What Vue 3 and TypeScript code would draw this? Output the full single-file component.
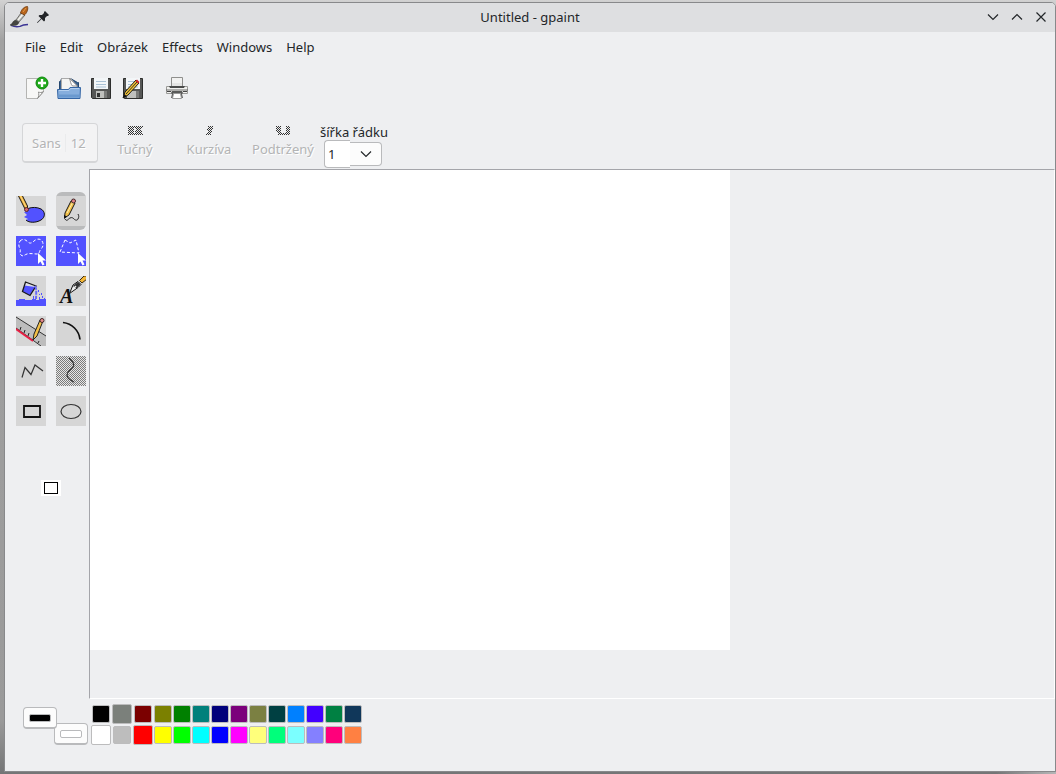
<script setup lang="ts">
import { ref } from 'vue'

interface Swatch {
  color: string
  big?: boolean
}

const menus: string[] = ['File', 'Edit', 'Obrázek', 'Effects', 'Windows', 'Help']

const swatches: Swatch[] = [
  { color: '#000000' },
  { color: '#7b807b', big: true },
  { color: '#7b0000' },
  { color: '#7b8000' },
  { color: '#008000' },
  { color: '#00807b' },
  { color: '#00007b' },
  { color: '#7b007b' },
  { color: '#7b8042' },
  { color: '#004042' },
  { color: '#0080ff' },
  { color: '#4200ff' },
  { color: '#008042' },
  { color: '#10375a' },
  { color: '#ffffff', big: true },
  { color: '#bdbdbd' },
  { color: '#ff0000', big: true },
  { color: '#ffff00' },
  { color: '#00ff00' },
  { color: '#00ffff' },
  { color: '#0000ff' },
  { color: '#ff00ff' },
  { color: '#ffff7b' },
  { color: '#00ff7b' },
  { color: '#7bffff' },
  { color: '#8480ff' },
  { color: '#ff007b' },
  { color: '#ff8042' },
]

const tool = ref<string>('pencil')
const lineWidth = ref<string>('1')
const foreground = ref<string>('#000000')
const background = ref<string>('#ffffff')

function widen(): void {
  lineWidth.value = String((Number(lineWidth.value) || 0) + 1)
}
</script>

<template>
  <div class="desktop">
    <div class="window">
      <header class="titlebar">
        <div class="title-left">
          <svg class="app-icon" viewBox="0 0 20 22" aria-hidden="true">
            <path d="M1 19.500q5 2 9 .8q3-1.500 8-1.800" fill="none" stroke="#3b3594" stroke-width="1.300" />
            <path d="M0 19c3-1 2-4 6-5l3 2c-1 4-5 4-9 3z" fill="#454641" stroke="#2a2a28" stroke-width=".5" />
            <path d="M6 14l5-7 4 2-6 7z" fill="#b9bab4" stroke="#5a5a58" stroke-width=".8" />
            <path d="M8 14l5-6" stroke="#f4f4f0" stroke-width="1.500" />
            <path d="M10.500 7c1-4 4-6.500 7-6.500c1 3-1 7-3 8.500z" fill="#b8651b" stroke="#6b3a12" stroke-width=".8" />
            <path d="M13 6l3-4" stroke="#e39a4c" stroke-width="1" />
          </svg>
          <button class="pin" type="button" aria-label="Keep on all desktops">
            <svg viewBox="0 0 12 12" aria-hidden="true">
              <path d="M8 0l4 4-1 1h-1l-2 2v2.500l-1 1-2.500-2.500L.5 12 0 11.500l4-4L1.500 5l1-1H5l2-2V1z" fill="#232629" />
            </svg>
          </button>
        </div>
        <h1>Untitled - gpaint</h1>
        <div class="title-right">
          <button type="button" aria-label="Minimize">
            <svg viewBox="0 0 12 12"><path d="M1 3.500l5 5 5-5" /></svg>
          </button>
          <button type="button" aria-label="Maximize">
            <svg viewBox="0 0 12 12"><path d="M1 8.500l5-5 5 5" /></svg>
          </button>
          <button type="button" aria-label="Close">
            <svg viewBox="0 0 12 12"><path d="M1.500 1.500l9 9M10.500 1.500l-9 9" /></svg>
          </button>
        </div>
      </header>

      <nav class="menubar" aria-label="Main menu">
        <button v-for="m in menus" :key="m" type="button">{{ m }}</button>
      </nav>

      <div class="toolbar" role="toolbar" aria-label="File">
        <button type="button" aria-label="New">
          <svg viewBox="0 0 24 24">
            <path d="M1.500 2.500h17v13l-6 7h-11z" fill="#f7f7f6" stroke="#b4b4b2" />
            <path d="M18.500 15.500c-2 1.500-4 1-5 .5c.500 2 .500 5-1 6.500z" fill="#fff" stroke="#8c8c8a" />
            <circle cx="17" cy="7" r="6" fill="#1fa81a" stroke="#0f8a0c" />
            <path d="M17 3v8M13 7h8" stroke="#fff" stroke-width="2.400" />
          </svg>
        </button>
        <button type="button" aria-label="Open">
          <svg viewBox="0 0 24 24">
            <path d="M2.500 15V5.500h1l1-3h9l7 4h1V15z" fill="#39618f" stroke="#24476f" />
            <path d="M4.500 14V2.500h9l6.500 7.500v4z" fill="#f4f4f3" stroke="#aaa" />
            <path d="M12.500 2.500l8 7.500h-5c-2-2-2-5-3-7.500z" fill="#fff" stroke="#777" stroke-width=".8" />
            <path d="M.5 13.500h11l1.500-2h10.500l-.5 11h-22z" fill="#86aedd" stroke="#3566a5" />
            <path d="M1.500 21.500h21v-3h-21z" fill="#6a99cf" />
            <path d="M2 14.500h10l1.500-2H22" fill="none" stroke="#b5d0ef" />
          </svg>
        </button>
        <button type="button" aria-label="Save">
          <svg viewBox="0 0 24 24">
            <path d="M2.500 2.500h19v20h-18l-1-1z" fill="#565756" stroke="#2d2e2d" />
            <path d="M5 2h14v11H5z" fill="#f3f6f8" />
            <path d="M7 5.500h10M7 8.500h10M7 11h10" stroke="#a9c1d4" />
            <path d="M7 15h11v7H7z" fill="#bfc0bd" />
            <path d="M15 15h3v7h-3z" fill="#797a78" />
            <path d="M8 17h3v4H8z" fill="#343534" />
          </svg>
        </button>
        <button type="button" aria-label="Save as">
          <svg viewBox="0 0 24 24">
            <path d="M2.500 2.500h19v20h-18l-1-1z" fill="#565756" stroke="#2d2e2d" />
            <path d="M5 2h14v11H5z" fill="#f3f6f8" />
            <path d="M7 5.500h10M7 8.500h10M7 11h10" stroke="#a9c1d4" />
            <path d="M6 15h12v7H6z" fill="#bfc0bd" />
            <path d="M15 15h3v7h-3z" fill="#797a78" />
            <path d="M2 22l2-6L15 4l3 3L7 19z" fill="#f0c23a" stroke="#1d1c18" />
            <path d="M5 18L16 6" stroke="#36311c" />
            <path d="M2 22l1.500-4 2 2z" fill="#111" />
            <path d="M14.500 5l1.500-1.500 2.500 2.500-1.500 1.500z" fill="#d02329" />
          </svg>
        </button>
        <button class="print" type="button" aria-label="Print">
          <svg viewBox="0 0 24 24">
            <path d="M6.500 10V1.500h11V10" fill="#f1f1f0" stroke="#8f8f8d" />
            <path d="M1.500 10.500h21v7h-21z" fill="#f0f0ee" stroke="#9a9a98" />
            <path d="M4 10h16l-1 2H5z" fill="#4a4b4a" />
            <path d="M7 7h10v3H7z" fill="#e4e4e3" />
            <path d="M1 14h22" stroke="#6d6d6b" />
            <path d="M2 15.500h4M18 15.500h4" stroke="#444" />
            <path d="M6 17l1-2h10l1 2-1 1 1 4H6l1-4z" fill="#5a5b5a" />
            <path d="M8.500 17.500h7l1 5h-9z" fill="#fff" stroke="#999" />
          </svg>
        </button>
      </div>

      <div class="formatbar">
        <button class="font-button" type="button" disabled><span>Sans</span><span class="size">12</span></button>
        <button class="style-button" type="button" disabled>
          <svg viewBox="0 0 18 9" shape-rendering="crispEdges" aria-hidden="true">
            <defs>
              <pattern id="dither" width="2" height="2" patternUnits="userSpaceOnUse">
                <path d="M0 0h1v1H0zM1 1h1v1H1z" fill="#333" />
              </pattern>
            </defs>
            <path d="M2 0h6v9H2zM8 0h10l-3 4 3 5H8l2-5z" fill="url(#dither)" />
          </svg>
          <span>Tučný</span>
        </button>
        <button class="style-button" type="button" disabled>
          <svg viewBox="0 0 18 9" shape-rendering="crispEdges" aria-hidden="true">
            <path d="M8 0h6l-3 9H6l2-4H7z" fill="url(#dither)" />
          </svg>
          <span>Kurzíva</span>
        </button>
        <button class="style-button" type="button" disabled>
          <svg viewBox="0 0 18 9" shape-rendering="crispEdges" aria-hidden="true">
            <path d="M2 0h5v7h5V0h4v9H4V6H2z" fill="url(#dither)" />
          </svg>
          <span>Podtržený</span>
        </button>
        <div class="line-width">
          <label for="line-width">šířka řádku</label>
          <div class="combo">
            <input id="line-width" v-model="lineWidth" type="text" inputmode="numeric" />
            <button type="button" aria-label="Choose line width" @click="widen">
              <svg viewBox="0 0 12 12"><path d="M1 3.500l5 5 5-5" /></svg>
            </button>
          </div>
        </div>
      </div>

      <main class="workspace">
        <aside class="tools">
          <div class="tool-grid" role="toolbar" aria-label="Tools">
            <button type="button" aria-label="Brush" :aria-pressed="tool === 'brush'" @click="tool = 'brush'">
              <svg viewBox="0 0 30 30">
                <path d="M11 13c4-2 10-2 14 0s5 8 0 11-12 3-15 0l2-1-4-2 3-2-3-3 4-1z" fill="#5252ff" />
                <path d="M12 12.500c4-1.500 9-1.500 13 .5s5 8 0 11-12 3-15 0" fill="none" stroke="#111" />
                <path d="M2-1l7 14h2.500V10L6-1z" fill="#f2b13a" stroke="#1a1a1a" />
                <path d="M4-1l6 12" stroke="#fbdc86" />
                <circle cx="10.500" cy="13.500" r="2" fill="#d4686c" stroke="#54292b" />
              </svg>
            </button>
            <button type="button" aria-label="Pencil" :aria-pressed="tool === 'pencil'" @click="tool = 'pencil'">
              <svg viewBox="0 0 30 30">
                <path d="M8.500 22l.5-5 6-12 4 2-6 12z" fill="#f2c04a" stroke="#1a1a1a" />
                <path d="M11 17l6-11" stroke="#fff0b0" />
                <path d="M8 23v-4l3 1.500z" fill="#111" />
                <circle cx="17.500" cy="5" r="2" fill="#e28087" stroke="#43282a" />
                <path d="M9 23c2 3 3 0 5-1s3 0 4 1 3 2 4 0 1-3 0-5" fill="none" stroke="#222" />
              </svg>
            </button>
            <button type="button" aria-label="Free selection" :aria-pressed="tool === 'lasso'" @click="tool = 'lasso'">
              <svg class="blue" viewBox="0 0 30 30">
                <path d="M4 5c3-3 6-1 8 1s4 1 6-1 6-3 8 0 1 6-1 8-1 5-4 5-7-1-10 0-4 3-6 1 0-4-1-6-2-5 0-8z" class="dash" />
                <path d="M22 17v11l2.500-2.500 2 4 2-1-2-4H30z" fill="#fff" />
              </svg>
            </button>
            <button type="button" aria-label="Polygon selection" :aria-pressed="tool === 'polyselect'" @click="tool = 'polyselect'">
              <svg class="blue" viewBox="0 0 30 30">
                <path d="M9 4l5 3 6-3 3 13-19-1z" class="dash" />
                <path d="M22 17v11l2.500-2.500 2 4 2-1-2-4H30z" fill="#fff" />
              </svg>
            </button>
            <button type="button" aria-label="Fill" :aria-pressed="tool === 'fill'" @click="tool = 'fill'">
              <svg viewBox="0 0 30 30">
                <path d="M0 24h3v-1h6v1h7v-1h4v1h3v-1h7v7H0z" fill="#5252ff" />
                <path d="M9.500 6L20 10l-6 9.500-7.500-4z" fill="#dfdfe6" />
                <path d="M8.500 9.500L19 11l-5 8.500-7.500-4z" fill="#5252ff" />
                <path d="M9.500 6L20 10l-6 9.500-7.500-4z" fill="none" stroke="#181818" stroke-width="1.300" />
                <path d="M19 10c2 3 1 8 1 13" fill="none" stroke="#6a6af5" stroke-width="2" stroke-dasharray="4 1" />
                <path d="M23 21h1v2h-1zM25 17h1v2h-1zM26 20h1v2h-1zM22 14h1v2h-1zM17 20h1v3h-1zM28 22h1v1h-1zM23 18h1v1h-1z" fill="#5252ff" />
              </svg>
            </button>
            <button type="button" aria-label="Text" :aria-pressed="tool === 'text'" @click="tool = 'text'">
              <svg viewBox="0 0 30 30">
                <text x="4" y="27" font-family="Liberation Serif, serif" font-size="20" font-style="italic" font-weight="bold" fill="#111">A</text>
                <path d="M23.500 4.500L28 0h3v3l-5 4z" fill="#f3b636" stroke="#3a2b10" />
                <path d="M13.500 17.500L17 9l5-3.500 3 3-3 3z" fill="#eee" stroke="#111" />
                <path d="M17 10l5-4 2.500 2.500-4 4z" fill="#333" />
                <path d="M18 12l2-2" stroke="#eee" stroke-width="1.500" />
              </svg>
            </button>
            <button type="button" aria-label="Line" :aria-pressed="tool === 'line'" @click="tool = 'line'">
              <svg viewBox="0 0 30 30">
                <path d="M0 1l30 19v10h-4L0 12z" fill="#bdbdbd" />
                <path d="M0 1l30 19M0 12l25 18" fill="none" stroke="#333" />
                <path d="M4 14l1-3M8 17l1-3M12 20l1-3M22 27l1-2" stroke="#222" />
                <path d="M0 13l17 12" stroke="#e81e43" stroke-width="2" />
                <path d="M17 24l1-6 6-14 3 1-6 15z" fill="#f1bf48" stroke="#222" />
                <circle cx="26" cy="4.500" r="2" fill="#e58b8d" stroke="#402828" />
              </svg>
            </button>
            <button type="button" aria-label="Arc" :aria-pressed="tool === 'arc'" @click="tool = 'arc'">
              <svg viewBox="0 0 30 30">
                <path d="M7 6.500c9 1 16 8 17 17" fill="none" stroke="#111" stroke-width="1.700" />
              </svg>
            </button>
            <button type="button" aria-label="Polyline" :aria-pressed="tool === 'polyline'" @click="tool = 'polyline'">
              <svg viewBox="0 0 30 30">
                <path d="M6 21.500l3-10 6 7 4-9.500 8 6" fill="none" stroke="#333" stroke-width="1.200" />
              </svg>
            </button>
            <button type="button" aria-label="Curve" disabled>
              <svg viewBox="0 0 30 30">
                <path d="M0 0h30v30H0z" fill="#e6e6e6" />
                <path d="M0 0h30v30H0z" fill="url(#dither)" opacity=".6" shape-rendering="crispEdges" />
                <path d="M13 2c4 4 6 6 4 9s-6 4-6 8 4 5 7 7" fill="none" stroke="#333" stroke-width="1.200" />
              </svg>
            </button>
            <button type="button" aria-label="Rectangle" :aria-pressed="tool === 'rect'" @click="tool = 'rect'">
              <svg viewBox="0 0 30 30">
                <path d="M8 10h16v11H8z" fill="none" stroke="#111" stroke-width="1.800" />
              </svg>
            </button>
            <button type="button" aria-label="Ellipse" :aria-pressed="tool === 'ellipse'" @click="tool = 'ellipse'">
              <svg viewBox="0 0 30 30">
                <ellipse cx="15" cy="15.500" rx="10" ry="7" fill="none" stroke="#333" stroke-width="1.200" />
              </svg>
            </button>
          </div>
          <button class="fill-mode" type="button" aria-label="Outline only"><i></i></button>
        </aside>
        <div class="viewport">
          <canvas class="drawing" width="640" height="480" aria-label="Drawing"></canvas>
        </div>
      </main>

      <footer class="palette">
        <div class="current">
          <button class="fore" type="button" aria-label="Foreground colour">
            <i :style="{ backgroundColor: foreground }"></i>
          </button>
          <button class="back" type="button" aria-label="Background colour">
            <i :style="{ backgroundColor: background }"></i>
          </button>
        </div>
        <div class="swatches">
          <button
            v-for="s in swatches"
            :key="s.color"
            type="button"
            :class="{ big: s.big }"
            :aria-label="s.color"
            :style="{ backgroundColor: s.color }"
            @click="foreground = s.color"
            @contextmenu.prevent="background = s.color"
          ></button>
        </div>
      </footer>
    </div>
  </div>
</template>

<style>
body {
  margin: 0;
}
</style>

<style scoped>
.desktop {
  box-sizing: border-box;
  min-height: 100vh;
  display: flex;
  padding: 2px 0 2px 4px;
  background:
    linear-gradient(to right, transparent calc(100% - 60px), #b4b5b6) bottom / 100% 2px no-repeat,
    linear-gradient(#d2d2d2, #a2a2a2 40px, #9a9a9a 720px, #747576);
  font-family: "Noto Sans", sans-serif;
  font-size: 13px;
  line-height: 18px;
  color: #232629;
}

.window {
  flex: 1;
  min-width: 0;
  display: flex;
  flex-direction: column;
  border: 1px solid #88898b;
  border-radius: 5px 5px 0 0;
  background: #eeeff1;
  overflow: hidden;
}

button {
  box-sizing: border-box;
  margin: 0;
  padding: 0;
  border: 0;
  background: none;
  font: inherit;
  color: inherit;
}

svg {
  display: block;
}

.titlebar {
  height: 29px;
  display: grid;
  grid-template-columns: 1fr auto 1fr;
  align-items: center;
  background: #dedfe1;
}

.titlebar h1 {
  margin: 0;
  padding-bottom: 2px;
  font-size: 13px;
  font-weight: 400;
}

.title-left {
  display: flex;
  align-items: center;
  gap: 7px;
  padding: 0 0 2px 5px;
}

.app-icon {
  width: 20px;
  height: 22px;
}

.pin svg {
  width: 12px;
  height: 12px;
}

.title-right {
  display: flex;
  justify-content: flex-end;
  padding: 0 2px 2px 0;
}

.title-right button {
  width: 24px;
  height: 24px;
  display: grid;
  place-items: center;
}

.title-right svg,
.combo svg {
  width: 12px;
  height: 12px;
  fill: none;
  stroke: #232629;
  stroke-width: 1.2;
}

.menubar {
  display: flex;
  height: 31px;
  padding-left: 13px;
}

.menubar button {
  padding: 0 7px 2px;
}

.toolbar {
  display: flex;
  align-items: center;
  gap: 8px;
  height: 50px;
  padding-left: 20px;
}

.toolbar svg {
  width: 24px;
  height: 24px;
}

.toolbar .print {
  margin-left: 12px;
}

.formatbar {
  display: flex;
  align-items: flex-start;
  height: 56px;
  padding-left: 17px;
}

.font-button {
  display: flex;
  align-items: center;
  width: 76px;
  height: 40px;
  margin-top: 10px;
  padding: 0 9px;
  border: 1px solid #d5d6d8;
  border-bottom-width: 2px;
  border-radius: 4px;
  background: #f3f3f4;
  color: #b3b4b5;
  text-shadow: 1px 1px #fff;
}

.font-button .size {
  margin-left: 4px;
  padding-left: 5px;
  border-left: 1px solid #eaebec;
}

.style-button {
  display: flex;
  flex-direction: column;
  align-items: center;
  gap: 5px;
  width: 74px;
  padding-top: 13px;
  color: #b3b4b5;
  text-shadow: 1px 1px #fff;
}

.style-button svg {
  width: 18px;
  height: 9px;
}

.line-width {
  padding-top: 11px;
}

.line-width label {
  display: block;
  line-height: 16px;
}

.combo {
  display: flex;
  align-items: center;
  padding-left: 4px;
}

.combo input {
  box-sizing: border-box;
  width: 26px;
  height: 28px;
  padding: 0 0 0 3px;
  border: 1px solid #b9babc;
  border-right: 0;
  border-radius: 4px 0 0 4px;
  background: #fff;
  font: inherit;
  color: inherit;
}

.combo button {
  width: 32px;
  height: 24px;
  display: grid;
  place-items: center;
  border: 1px solid #b9babc;
  border-left: 0;
  border-radius: 0 4px 4px 0;
  background: #fcfcfc;
}

.workspace {
  flex: 1;
  display: flex;
  min-height: 0;
}

.tools {
  flex: none;
  width: 84px;
  display: flex;
  flex-direction: column;
  align-items: flex-start;
}

.tool-grid {
  display: grid;
  grid-template-columns: 30px 30px;
  gap: 10px;
  padding: 27px 0 0 11px;
}

.tool-grid button {
  display: grid;
  place-items: center;
  height: 30px;
}

.tool-grid button[aria-pressed="true"] {
  height: 38px;
  margin: -4px 0;
  border-radius: 6px;
  background: #babbbc;
}

.tool-grid svg {
  width: 30px;
  height: 30px;
  background: #d6d6d6;
}

.tool-grid .blue {
  background: #5252ff;
}

.dash {
  fill: none;
  stroke: #fff;
  stroke-dasharray: 3 2;
}

.fill-mode {
  display: grid;
  place-items: center;
  width: 20px;
  height: 16px;
  margin: 54px 0 0 36px;
  background: #fff;
}

.fill-mode i {
  box-sizing: border-box;
  width: 14px;
  height: 12px;
  border: 1px solid #000;
}

.viewport {
  flex: 1;
  min-width: 0;
  overflow: hidden;
  border: 1px solid #a4a5aa;
  border-right-color: #fff;
  border-bottom-color: #fff;
}

.drawing {
  display: block;
  background: #fff;
}

.palette {
  display: flex;
  align-items: flex-start;
  height: 72px;
  padding-left: 18px;
}

.current {
  display: flex;
  width: 67px;
  padding-top: 8px;
}

.current button {
  flex: none;
  display: grid;
  place-items: center;
  width: 34px;
  height: 22px;
  border: 1px solid #b9babc;
  border-bottom-width: 2px;
  border-radius: 4px;
  background: #fcfcfc;
}

.current .fore {
  z-index: 1;
}

.current .back {
  margin: 16px 0 0 -3px;
}

.current i {
  box-sizing: border-box;
  width: 22px;
  height: 8px;
  border: 1px solid #b9babc;
  border-radius: 2px;
}

.swatches {
  display: grid;
  grid-template-columns: repeat(3, 21px) repeat(11, 19px);
  grid-auto-rows: 21px;
  place-items: center;
  padding-top: 4px;
}

.swatches button {
  width: 18px;
  height: 18px;
  border: 1px solid #bcbcbd;
  border-radius: 2px;
}

.swatches .big {
  width: 20px;
  height: 20px;
}
</style>
